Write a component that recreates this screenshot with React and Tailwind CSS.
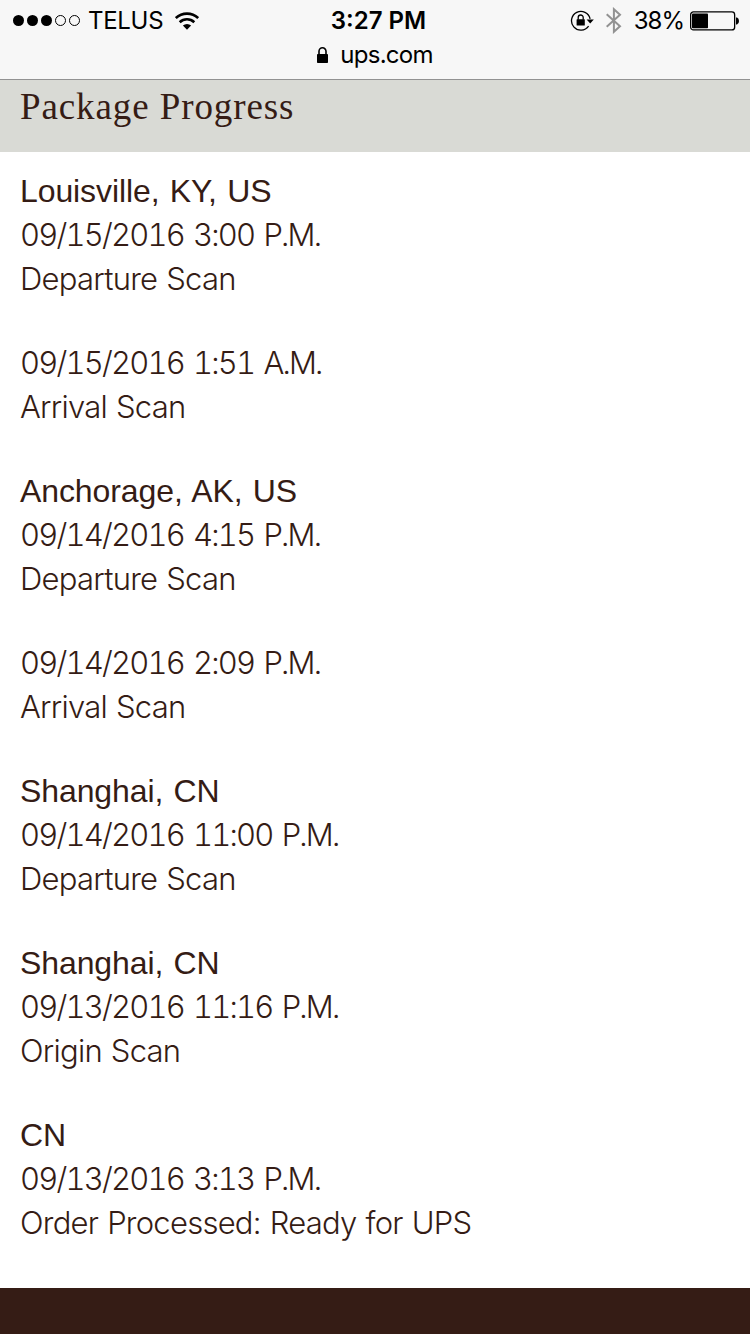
import React from 'react';

const progress = [
  {
    location: 'Louisville, KY, US',
    scans: [
      { date: '09/15/2016 3:00 P.M.', activity: 'Departure Scan' },
      { date: '09/15/2016 1:51 A.M.', activity: 'Arrival Scan' },
    ],
  },
  {
    location: 'Anchorage, AK, US',
    scans: [
      { date: '09/14/2016 4:15 P.M.', activity: 'Departure Scan' },
      { date: '09/14/2016 2:09 P.M.', activity: 'Arrival Scan' },
    ],
  },
  {
    location: 'Shanghai, CN',
    scans: [{ date: '09/14/2016 11:00 P.M.', activity: 'Departure Scan' }],
  },
  {
    location: 'Shanghai, CN',
    scans: [{ date: '09/13/2016 11:16 P.M.', activity: 'Origin Scan' }],
  },
  {
    location: 'CN',
    scans: [{ date: '09/13/2016 3:13 P.M.', activity: 'Order Processed: Ready for UPS' }],
  },
];

function SignalDots() {
  return (
    <div className="flex gap-[3px]">
      {[true, true, true, false, false].map((filled, index) => (
        <span
          key={index}
          className={filled ? 'size-[11px] rounded-full bg-black' : 'size-[11px] rounded-full border border-black'}
        />
      ))}
    </div>
  );
}

function WifiIcon() {
  return (
    <svg className="ml-3 h-[18px] w-6" viewBox="0 0 24 18" fill="none" stroke="#000">
      <path d="M0.8 6.1A16.2 16.2 0 0 1 23.2 6.1" strokeWidth="2.7" />
      <path d="M4.7 10.2A10.6 10.6 0 0 1 19.3 10.2" strokeWidth="2.6" />
      <path d="M12 17.8L7.9 13.6A5.8 5.8 0 0 1 16.1 13.6Z" fill="#000" stroke="none" />
    </svg>
  );
}

function RotationLockIcon() {
  return (
    <svg className="h-[22px] w-6" viewBox="0 0 24 22" fill="none" stroke="#000">
      <path d="M18.6 16.2A9.4 9.4 0 1 1 20.1 8.8" strokeWidth="1.3" />
      <path d="M16.6 9.6H23.8L20.2 13.6Z" fill="#000" stroke="none" />
      <rect x="6.6" y="9.2" width="8.2" height="6.4" rx="0.5" fill="#000" stroke="none" />
      <path d="M8.2 9.7V7.5a2.5 2.5 0 0 1 5 0v2.2" strokeWidth="1.3" />
    </svg>
  );
}

function BluetoothIcon() {
  return (
    <svg className="ml-3 h-[27px] w-4" viewBox="0 0 16 27" fill="none" stroke="#929292" strokeWidth="2">
      <path d="M0.7 7.2L14 19.2L7.9 24.8V2.2L14 7.8L0.7 19.8" />
    </svg>
  );
}

function BatteryIcon() {
  return (
    <svg className="ml-[6px] h-5 w-[49px]" viewBox="0 0 49 20">
      <rect x="0.65" y="0.95" width="44" height="18" rx="2.8" fill="none" stroke="#000" strokeWidth="1.3" />
      <rect x="2" y="2.6" width="16" height="14.6" rx="0.8" />
      <path d="M46 6.5h1q2 0.5 2 3.5t-2 3.5h-1z" />
    </svg>
  );
}

function LockIcon() {
  return (
    <svg className="h-4 w-[11px]" viewBox="0 0 11 16">
      <rect x="0" y="7" width="11" height="9" rx="0.8" />
      <path d="M2 8V4.3a3.5 3.5 0 0 1 7 0V8" fill="none" stroke="#000" strokeWidth="1.6" />
    </svg>
  );
}

function StatusBar() {
  return (
    <header className="h-20 border-b border-[#929292] bg-[#f7f7f7] font-['Inter',sans-serif] text-black">
      <div className="grid h-[41px] grid-cols-[1fr_auto_1fr] items-center pl-[13px] pr-[11px]">
        <div className="flex items-center">
          <SignalDots />
          <span className="ml-2 text-[24px] leading-10 tracking-[-0.3px]">TELUS</span>
          <WifiIcon />
        </div>
        <span className="ml-[5px] text-[24px] font-semibold leading-10">3:27 PM</span>
        <div className="flex items-center justify-end">
          <RotationLockIcon />
          <BluetoothIcon />
          <span className="ml-3 text-[24px] leading-10 tracking-[-1px]">38%</span>
          <BatteryIcon />
        </div>
      </div>
      <div className="flex h-[27px] items-center justify-center gap-3">
        <LockIcon />
        <span className="text-[24px] leading-[27px] tracking-[-0.75px]">ups.com</span>
      </div>
    </header>
  );
}

function Scan({ date, activity }) {
  return (
    <div className="font-['Inter',sans-serif] text-[31px] font-light leading-[44px]">
      <p className="tabular-nums tracking-[-1.8px] [word-spacing:2.5px]">{date}</p>
      <p className="tracking-[-0.75px] [word-spacing:1px]">{activity}</p>
    </div>
  );
}

function App() {
  return (
    <div className="flex h-[1334px] w-[750px] flex-col overflow-hidden bg-white text-[#351c15]">
      <StatusBar />
      <h1 className="h-[72px] bg-[#d9dad5] pl-5 font-['Liberation_Serif',serif] text-[37px] leading-[54px] tracking-[0.9px]">
        Package Progress
      </h1>
      <main className="flex flex-1 flex-col gap-10 px-5 pt-[17px]">
        {progress.map((stop, index) => (
          <section key={index}>
            <h2 className="font-['Liberation_Sans',sans-serif] text-[32px] leading-[44px] tracking-[-0.1px] [word-spacing:1.5px]">
              {stop.location}
            </h2>
            <div className="flex flex-col gap-10">
              {stop.scans.map((scan) => (
                <Scan key={scan.date} date={scan.date} activity={scan.activity} />
              ))}
            </div>
          </section>
        ))}
      </main>
      <footer className="h-[46px] bg-[#351c15]" />
    </div>
  );
}

export default App;
